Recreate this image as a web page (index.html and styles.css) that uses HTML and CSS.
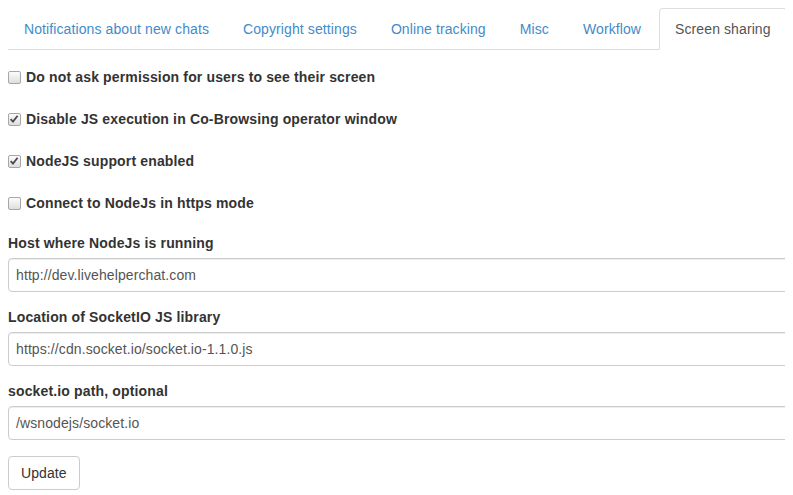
FILE: index.html
```html
<!DOCTYPE html>
<html>
<head>
<meta charset="utf-8">
<link rel="stylesheet" href="styles.css">
</head>
<body>
<div class="page">
  <ul class="tabs">
    <li class="tab"><a>Notifications about new chats</a></li>
    <li class="tab"><a>Copyright settings</a></li>
    <li class="tab"><a>Online tracking</a></li>
    <li class="tab"><a>Misc</a></li>
    <li class="tab"><a>Workflow</a></li>
    <li class="tab active"><a>Screen sharing</a></li>
  </ul>
  <div class="checks">
    <label class="check"><span class="box"></span>Do not ask permission for users to see their screen</label>
    <label class="check"><span class="box checked"><svg viewBox="0 0 12 12" width="12" height="12"><path d="M2.6 6.2 L5 8.6 L9.6 2.8" fill="none" stroke="#4a4a4a" stroke-width="1.8"/></svg></span>Disable JS execution in Co-Browsing operator window</label>
    <label class="check"><span class="box checked"><svg viewBox="0 0 12 12" width="12" height="12"><path d="M2.6 6.2 L5 8.6 L9.6 2.8" fill="none" stroke="#4a4a4a" stroke-width="1.8"/></svg></span>NodeJS support enabled</label>
    <label class="check"><span class="box"></span>Connect to NodeJs in https mode</label>
  </div>
  <div class="group">
    <label class="field-label">Host where NodeJs is running</label>
    <div class="input">http://dev.livehelperchat.com</div>
  </div>
  <div class="group">
    <label class="field-label">Location of SocketIO JS library</label>
    <div class="input">https://cdn.socket.io/socket.io-1.1.0.js</div>
  </div>
  <div class="group">
    <label class="field-label">socket.io path, optional</label>
    <div class="input">/wsnodejs/socket.io</div>
  </div>
  <button class="btn">Update</button>
</div>
</body>
</html>
```
FILE: styles.css
```css
html, body { overflow: hidden; }
body {
  margin: 8px;
  font-family: "Liberation Sans", Arial, sans-serif;
  font-size: 14px;
  line-height: 20px;
  letter-spacing: 0.1px;
  color: #333;
  background: #fff;
}
.page { width: 900px; }
.tabs {
  list-style: none;
  margin: 0;
  padding: 0;
  display: flex;
  border-bottom: 1px solid #ddd;
  height: 41px;
}
.tab { margin-right: 2px; margin-bottom: -1px; }
.tab a {
  display: block;
  padding: 10px 15px;
  border: 1px solid transparent;
  border-radius: 4px 4px 0 0;
  color: #428bca;
  line-height: 20px;
}
.tab.active a {
  color: #555;
  background: #fff;
  border-color: #ddd #ddd transparent;
}
.checks {
  display: flex;
  flex-direction: column;
  gap: 22px;
  margin: 17px 0 20px;
}
.check {
  display: flex;
  align-items: center;
  font-weight: bold;
  letter-spacing: 0.15px;
  height: 20px;
}
.box {
  width: 11px;
  height: 11px;
  border: 1px solid #a6a6a6;
  border-radius: 2px;
  background: linear-gradient(#fcfcfc, #dedede);
  margin-right: 5px;
  position: relative;
  flex: none;
}
.box svg { position: absolute; left: -1px; top: -1px; }
.group { margin-bottom: 15px; }
.field-label {
  display: block;
  font-weight: bold;
  letter-spacing: 0.15px;
  margin-bottom: 5px;
}
.input {
  height: 34px;
  box-sizing: border-box;
  padding: 6px 7px;
  border: 1px solid #ccc;
  border-radius: 4px;
  box-shadow: inset 0 1px 1px rgba(0,0,0,.075);
  color: #555;
}
.btn {
  font-family: "Liberation Sans", Arial, sans-serif;
  font-size: 14px;
  line-height: 20px;
  letter-spacing: 0.1px;
  padding: 6px 12px;
  height: 34px;
  border: 1px solid #ccc;
  border-radius: 4px;
  background: #fff;
  color: #333;
  margin-top: 1px;
}
```
